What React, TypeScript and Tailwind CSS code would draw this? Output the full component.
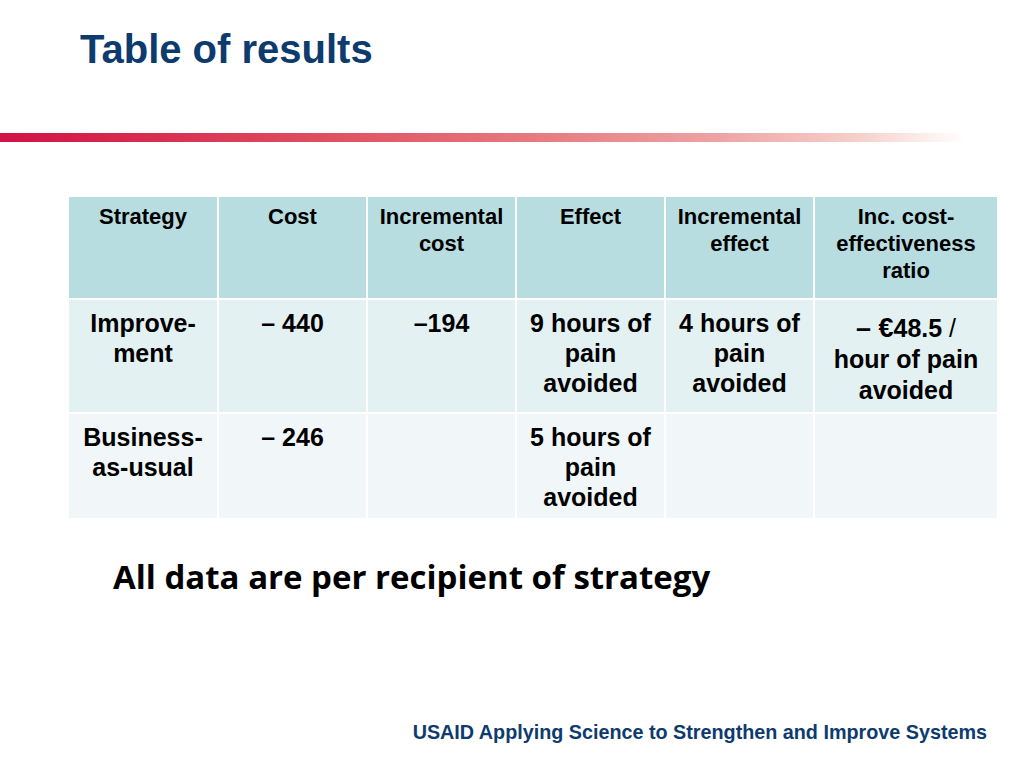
function HeadCell({ children }: { children: React.ReactNode }) {
  return (
    <div className="bg-[#b7dde1] px-2 pt-[6px] text-center text-[22px] font-bold leading-[27px] text-black">
      {children}
    </div>
  )
}

function BodyCell({ children, tone }: { children?: React.ReactNode; tone: "a" | "b" }) {
  return (
    <div
      className={`${tone === "a" ? "bg-[#e4f1f3]" : "bg-[#f1f7f8]"} px-2 pt-[8px] text-center text-[25px] font-bold leading-[30px] text-black`}
    >
      {children}
    </div>
  )
}

export default function App() {
  return (
    <div className="flex h-[768px] w-[1024px] flex-col bg-white font-['Liberation_Sans',Arial,sans-serif]">
      {/* Title */}
      <h1 className="pl-[80px] pt-[29px] text-[40px] font-bold leading-none text-[#0d3b6e]">Table of results</h1>

      {/* Red rule */}
      <div className="mt-[64px] h-[9px] w-[995px] bg-[linear-gradient(to_right,#d11245_0%,#dc4058_25%,#e5727a_50%,#eea3a3_72%,#f6cfca_86%,#ffffff_97%)]" />

      {/* Table */}
      <div className="ml-[69px] mt-[55px] grid w-[928px] grid-cols-[148px_147px_147px_147px_147px_182px] grid-rows-[101px_112px_104px] gap-[2px]">
        <HeadCell>Strategy</HeadCell>
        <HeadCell>Cost</HeadCell>
        <HeadCell>
          Incremental
          <br />
          cost
        </HeadCell>
        <HeadCell>Effect</HeadCell>
        <HeadCell>
          Incremental
          <br />
          effect
        </HeadCell>
        <HeadCell>
          Inc. cost-
          <br />
          effectiveness
          <br />
          ratio
        </HeadCell>

        <BodyCell tone="a">
          Improve-
          <br />
          ment
        </BodyCell>
        <BodyCell tone="a">– 440</BodyCell>
        <BodyCell tone="a">–194</BodyCell>
        <BodyCell tone="a">
          9 hours of
          <br />
          pain
          <br />
          avoided
        </BodyCell>
        <BodyCell tone="a">
          4 hours of
          <br />
          pain
          <br />
          avoided
        </BodyCell>
        <div className="bg-[#e4f1f3] px-2 pt-[13px] text-center text-[25px] font-bold leading-[31px] text-black">
          <span className="text-[27px]">– €</span>48.5 <span className="font-normal">/</span>
          <br />
          hour of pain
          <br />
          avoided
        </div>

        <BodyCell tone="b">
          Business-
          <br />
          as-usual
        </BodyCell>
        <BodyCell tone="b">– 246</BodyCell>
        <BodyCell tone="b" />
        <BodyCell tone="b">
          5 hours of
          <br />
          pain
          <br />
          avoided
        </BodyCell>
        <BodyCell tone="b" />
        <BodyCell tone="b" />
      </div>

      {/* Note */}
      <p className="ml-[113px] mt-[42px] font-['Open_Sans',sans-serif] text-[33px] font-bold leading-none text-black">
        All data are per recipient of strategy
      </p>

      {/* Footer */}
      <p className="mr-[37px] mt-auto mb-[25px] text-right text-[19.75px] font-bold leading-none text-[#0d3b6e]">
        USAID Applying Science to Strengthen and Improve Systems
      </p>
    </div>
  )
}
